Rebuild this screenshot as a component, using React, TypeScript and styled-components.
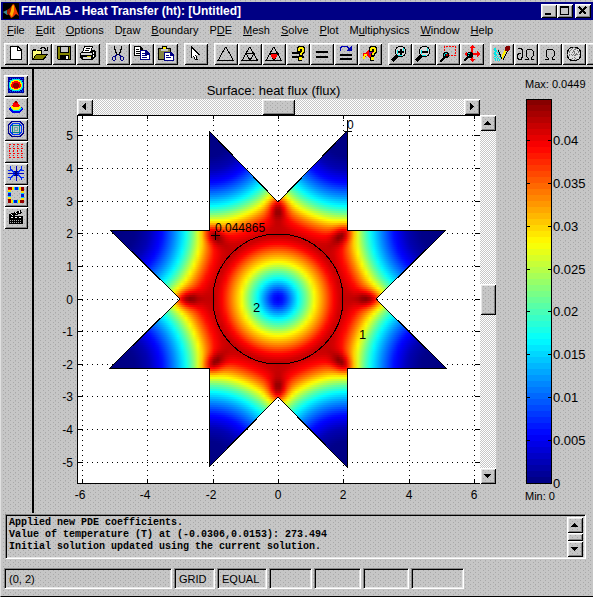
import React from "react";
import styled, { createGlobalStyle, css } from "styled-components";

const dither = css`
  background-color: #c6c6c6;
  background-image: conic-gradient(from 270deg at 1px 1px, #a9a9a9 90deg, transparent 0),
    conic-gradient(from 270deg at 1px 1px, #a9a9a9 90deg, transparent 0),
    conic-gradient(from 270deg at 1px 1px, #b8b8b8 90deg, transparent 0);
  background-size: 5px 4px, 5px 4px, 10px 8px;
  background-position: 0 0, 3px 2px, 5px 1px;
`;

const checker = css`
  background: conic-gradient(#fff 90deg, #c6c6c6 0 180deg, #fff 0 270deg, #c6c6c6 0) 0 0 / 2px 2px;
`;

const raised = css`
  border: 0;
  padding: 0;
  box-shadow: inset 1px 1px #fff, inset -1px -1px #000, inset 2px 2px #e6e6e6, inset -2px -2px #848484;
`;

const GlobalStyle = createGlobalStyle`
  * { box-sizing: border-box; }
  body { margin: 0; ${dither} color: #000; font: 11px/14px "Liberation Sans", Arial, sans-serif; }
  button { font: inherit; color: inherit; }
  svg { display: block; }
`;

const Window = styled.div`
  min-height: 100vh;
  display: flex;
  flex-direction: column;
  overflow: hidden;
  padding-top: 2px;
  border-left: 1px solid #e0e0e0;
  border-bottom: 1px solid #000;
`;

const TitleBar = styled.header`
  height: 18px;
  display: flex;
  align-items: center;
  gap: 2px;
  padding: 0 2px;
  background: #000084;
  color: #fff;
`;

const Title = styled.h1`
  flex: 1;
  margin: 0;
  font-size: 12px;
  line-height: 16px;
  font-weight: bold;
  white-space: nowrap;
`;

const WindowButtons = styled.div`
  display: flex;
`;

const WindowButton = styled.button<{ $apart?: boolean }>`
  ${raised}
  width: 16px;
  height: 14px;
  margin-left: ${(p) => (p.$apart ? 2 : 0)}px;
  background-color: #c6c6c6;
`;

const MenuBar = styled.nav`
  height: 23px;
  display: flex;
  align-items: flex-start;
  gap: 11px;
  padding: 3px 6px;
`;

const MenuItem = styled.button`
  border: 0;
  padding: 0;
  background: none;
  white-space: nowrap;
`;

const ToolBar = styled.div`
  height: 26px;
  display: flex;
  gap: 6px;
  padding-left: 3px;
  border-bottom: 2px solid #000;
`;

const ToolGroup = styled.div`
  display: flex;
  flex: none;
`;

const ToolButton = styled.button`
  ${raised}
  ${dither}
  width: 24px;
  height: 22px;
  flex: none;
  display: flex;
  align-items: center;
  justify-content: center;
`;

const Workspace = styled.main`
  display: flex;
  height: 444px;
`;

const SideBar = styled.aside`
  width: 33px;
  padding: 6px 0 0 3px;
  border-right: 2px solid #000;
`;

const Figure = styled.section`
  flex: 1;
  display: grid;
  grid-template-columns: 43px 1fr 16px 97px;
  grid-template-rows: 30px 16px auto;
  align-content: start;
`;

const FigureTitle = styled.h2`
  grid-column: 2;
  margin: 0;
  padding: 14px 10px 0 0;
  font-size: 13px;
  line-height: 16px;
  font-weight: normal;
  text-align: center;
`;

const MaxLabel = styled.div`
  grid-column: 4;
  padding: 8px 0 0 29px;
`;

const ScrollTrack = styled.div<{ $vertical?: boolean }>`
  ${checker}
  display: flex;
  flex-direction: ${(p) => (p.$vertical ? "column" : "row")};
  justify-content: space-between;
  grid-column: ${(p) => (p.$vertical ? 3 : 2)};
  grid-row: ${(p) => (p.$vertical ? 3 : 2)};
`;

const ScrollButton = styled.button`
  ${raised}
  ${dither}
  width: 16px;
  height: 16px;
  display: flex;
  align-items: center;
  justify-content: center;
`;

const ScrollThumb = styled.div<{ $vertical?: boolean }>`
  ${raised}
  ${dither}
  width: ${(p) => (p.$vertical ? 16 : 33)}px;
  height: ${(p) => (p.$vertical ? 31 : 16)}px;
`;

const PlotCell = styled.div`
  grid-column: 2;
  grid-row: 3;
  svg { width: 100%; height: auto; overflow: visible; }
`;

const ColorBarCell = styled.div`
  grid-column: 4;
  grid-row: 2 / 4;
  padding-left: 30px;
  svg { overflow: visible; }
`;

const sunken = css`
  border: 1px solid;
  border-color: #848484 #fff #fff #848484;
  box-shadow: inset 1px 1px #000, inset -1px -1px #e6e6e6;
`;

const LogPanel = styled.section`
  ${sunken}
  height: 45px;
  margin: 1px 7px 0 4px;
  display: flex;
  justify-content: space-between;
  padding: 2px 2px 2px 3px;
`;

const LogText = styled.pre`
  margin: 0;
  font: bold 10px/12px "Liberation Mono", "Courier New", monospace;
`;

const LogScroll = styled.div`
  display: flex;
  flex-direction: column;
  justify-content: space-between;
  height: 40px;
`;

const LogThumb = styled.div`
  ${raised}
  ${dither}
  width: 16px;
  height: 8px;
`;

const StatusBar = styled.footer`
  display: flex;
  gap: 2px;
  padding: 9px 3px 7px;
`;

const StatusCell = styled.div<{ $width: number }>`
  ${sunken}
  width: ${(p) => p.$width}px;
  height: 21px;
  padding: 3px 4px;
`;

const Mark = styled.text<{ $large?: boolean }>`
  font: ${(p) => (p.$large ? 13 : 12)}px "Liberation Sans", Arial, sans-serif;
`;

/* ---------- heat-flux field ---------- */

type Table = [number, number][];

function lookup(table: Table, x: number) {
  if (x <= table[0][0]) return table[0][1];
  for (let i = 1; i < table.length; i++) {
    const [x1, y1] = table[i];
    if (x <= x1) {
      const [x0, y0] = table[i - 1];
      return y0 + ((y1 - y0) * (x - x0)) / (x1 - x0);
    }
  }
  return table[table.length - 1][1];
}

const DISC: Table = [[0, 0.11], [6, 0.15], [13, 0.26], [20, 0.37], [29, 0.5], [37, 0.63], [47, 0.76], [55, 0.87], [65, 0.95], [90, 0.96]];
const ARM: Table = [[0, 0], [25, 0.01], [38, 0.05], [52, 0.14], [65, 0.27], [74, 0.37], [81, 0.47], [90, 0.62], [98, 0.75], [106, 0.86], [115, 0.92], [125, 0.94]];

function flux(x: number, y: number) {
  const r = Math.hypot(x, y);
  const step = Math.PI / 4;
  const a = ((Math.atan2(y, x) % step) + step) % step;
  const off = a - step / 2;
  const d = Math.hypot(181 - r * Math.cos(off), r * Math.sin(off));
  const corner = Math.min(a, step - a);
  const along = r * Math.cos(corner) - 91;
  const across = r * Math.sin(corner);
  const bump = 0.16 * Math.exp(-((along / 11) ** 2) - (across / 9) ** 2);
  return Math.min(1, Math.min(lookup(DISC, r), lookup(ARM, d)) + bump);
}

function jet(v: number) {
  const ch = (c: number) => Math.round(255 * Math.max(0, Math.min(1, 1.5 - Math.abs(4 * v - c))));
  return `rgb(${ch(3)},${ch(2)},${ch(1)})`;
}

const CX = 201;
const CY = 184;
const STAR = [
  [-69, -168], [0, -97], [69, -168], [69, -69], [168, -69], [98, 0], [168, 69], [69, 69],
  [69, 168], [0, 98], [-69, 168], [-69, 69], [-168, 69], [-98, 0], [-168, -69], [-69, -69],
].map(([x, y]) => `${CX + x},${CY + y}`).join(" ");

const BAND = 2;
const BANDS = Array.from({ length: 168 }, (_, i) => {
  const y = -168 + i * BAND;
  const half = Math.abs(y + 1) > 69 ? 70 : 168;
  const count = half === 70 ? 35 : 84;
  const stops = Array.from({ length: count + 1 }, (_, k) => jet(flux(-half + (2 * half * k) / count, y + 1)));
  return { y, half, stops };
});

const XT: [number, string][] = [[5, "-6"], [70, "-4"], [136, "-2"], [201, "0"], [266, "2"], [332, "4"], [397, "6"]];
const YT: [number, string][] = [[20, "5"], [53, "4"], [86, "3"], [118, "2"], [151, "1"], [184, "0"], [216, "-1"], [249, "-2"], [281, "-3"], [314, "-4"], [347, "-5"]];

function SurfacePlot() {
  return (
    <svg viewBox="0 0 403 369" role="img" aria-label="Heat flux surface">
      <defs>
        <clipPath id="star"><polygon points={STAR} /></clipPath>
        {BANDS.map((b, i) => (
          <linearGradient key={i} id={`band${i}`} gradientUnits="userSpaceOnUse" x1={CX - b.half} x2={CX + b.half} y1="0" y2="0">
            {b.stops.map((c, k) => <stop key={k} offset={k / (b.stops.length - 1)} stopColor={c} />)}
          </linearGradient>
        ))}
      </defs>
      <rect width="403" height="369" fill="#fff" />
      <g shapeRendering="crispEdges" stroke="#000">
        {XT.map(([x]) => <path key={x} d={`M${x + 0.5} 0V369`} strokeDasharray="1 4" />)}
        {YT.map(([y]) => <path key={y} d={`M0 ${y + 0.5}H403`} strokeDasharray="1 4" />)}
        {XT.map(([x]) => <path key={x} d={`M${x + 0.5} 0v4M${x + 0.5} 369v-5`} />)}
        {YT.map(([y]) => <path key={y} d={`M0 ${y + 0.5}h5M403 ${y + 0.5}h-5`} />)}
        <path d="M0 .5H403M.5 0V369M0 368.5H403" />
      </g>
      <g clipPath="url(#star)" shapeRendering="crispEdges">
        {BANDS.map((b, i) => (
          <rect key={i} x={CX - b.half} y={CY + b.y} width={2 * b.half} height={BAND} fill={`url(#band${i})`} />
        ))}
      </g>
      <g fill="none" stroke="#000" shapeRendering="crispEdges">
        <polygon points={STAR} />
        <circle cx="201" cy="184" r="65" />
        <path d="M134 120.5h9M138.5 116v9M267 16.5h8M270.5 5v12" />
      </g>
      <Mark x="138" y="117">0.044865</Mark>
      <Mark x="270" y="14">0</Mark>
      <Mark x="176" y="197" $large>2</Mark>
      <Mark x="282" y="224" $large>1</Mark>
      {XT.map(([x, t]) => <Mark key={t} x={t.startsWith("-") ? x - 2 : x} y="384" textAnchor="middle">{t}</Mark>)}
      {YT.map(([y, t]) => <Mark key={t} x="-4" y={y + 5} textAnchor="end">{t}</Mark>)}
    </svg>
  );
}

const BAR_TICKS: [number, string][] = [[41, "0.04"], [84, "0.035"], [127, "0.03"], [170, "0.025"], [212, "0.02"], [255, "0.015"], [298, "0.01"], [341, "0.005"], [384, "0"]];

function ColorBar() {
  return (
    <svg width="26" height="385" role="img" aria-label="Colour scale">
      {Array.from({ length: 64 }, (_, i) => (
        <rect key={i} x="0" y={i * 6} width="26" height="6" fill={jet(1 - (i + 0.5) / 64)} />
      ))}
      <g stroke="#000" fill="none" shapeRendering="crispEdges">
        <rect x=".5" y=".5" width="25" height="384" />
        {BAR_TICKS.map(([y]) => <path key={y} d={`M0 ${y + 0.5}h4M26 ${y + 0.5}h-4`} />)}
      </g>
      {BAR_TICKS.map(([y, t]) => <Mark key={t} x="27" y={y + 5} $large>{t}</Mark>)}
      <text x="-1" y="401">Min: 0</text>
    </svg>
  );
}

/* ---------- icons ---------- */

const Pix = ({ children }: { children?: React.ReactNode }) => (
  <svg width="20" height="18" viewBox="0 0 20 18" fill="none" stroke="none" shapeRendering="crispEdges" aria-hidden="true">
    {children}
  </svg>
);

const Arrow = ({ d }: { d: string }) => (
  <svg width="8" height="8" viewBox="0 0 8 8" shapeRendering="crispEdges" aria-hidden="true"><path d={d} /></svg>
);
const LEFT = "M5 0v7h-1v-1h-1v-1h-1v-1h-1v-1h1v-1h1v-1h1v-1z";
const RIGHT = "M2 0v7h1v-1h1v-1h1v-1h1v-1h-1v-1h-1v-1h-1v-1z";
const UP = "M0 6h7v-1h-1v-1h-1v-1h-1v-1h-1v1h-1v1h-1v1h-1z";
const DOWN = "M0 2h7v1h-1v1h-1v1h-1v1h-1v-1h-1v-1h-1v-1h-1z";

const Magnifier = ({ sign }: { sign: string }) => (
  <Pix>
    <path d="M8 10l-6 6" stroke="#000" strokeWidth="3" />
    <path d="M8 1h5v1h2v2h1v5h-1v2h-2v1H8v-1H6V9H5V4h1V2h2z" fill="#000" />
    <path d="M8 2h5v1h1v1h1v5h-1v1h-1v1H8v-1H7V9H6V4h1V3h1z" fill="#d8d8d8" />
    <path d="M7 5h1v5h4v1H8V9H7zM13 3h1v5h-1z" fill="#00e7e7" />
    <path d={sign} fill="#000" />
  </Pix>
);

const Question = ({ x }: { x: number }) => (
  <g transform={`translate(${x} 0)`}>
    <path d="M1 1h6v1h1v6h-1v1h-1v2h-1v5H1v-4h1V8h2V5H4v2H0V2h1z" fill="#000" />
    <path d="M1 3h1V2h4v1h1v4H6v1H5v2H3V8h1V7h1V4H3v2H1zM2 12h3v3H2z" fill="#ffef00" />
  </g>
);

const BoundarySide = () => (
  <>
    <path d="M2 0h4v3H2z" fill="#940000" />
    <path d="M6 0h2v3H6zM13 0h2v3h-2z" fill="#ffde00" />
    <path d="M8 0h1v3H8zM12 0h1v3h-1z" fill="#00d6ff" />
    <path d="M9 0h3v3H9z" fill="#0018d6" />
    <path d="M15 0h1v3h-1z" fill="#f00" />
  </>
);

const TRI = "M9.500 2L2 15.500H17.500L10 2";

const icons: Record<string, React.ReactNode> = {
  New: <Pix><path d="M4 1h8l4 4v10H4z" fill="#000" /><path d="M5 2h6v4h4v8H5z" fill="#fff" /><path d="M12 3l2 2h-2z" fill="#fff" /></Pix>,
  Open: <Pix><path d="M2 5h1V4h3v1h6v4H6l-4 6z" fill="#000" /><path d="M3 6h3V5h1v1h4v3H6l-3 5z" fill="#ffff7b" /><path d="M6 9h12l-4 6H2z" fill="#000" /><path d="M6 10h10l-3 4H4z" fill="#848400" /><path d="M10 3.500h1V2h3v1h1v2h2M17.500 2v4M14 5.500h4" stroke="#000" /></Pix>,
  Save: <Pix><path d="M3 1h14v14H4l-1-1z" fill="#000" /><path d="M4 2h2v6h9V2h1v12H4z" fill="#848400" /><path d="M7 2h7v5H7z" fill="#c6c6c6" /><path d="M6 10h9v4H6z" fill="#000" /><path d="M12 11h2v3h-2z" fill="#fff" /></Pix>,
  Print: <Pix><path d="M6 1h9l-1 4h2l2 2v4l-3 4H4l-2-2V8l3-3z" fill="#000" /><path d="M7 2h7l-2 5H5z" fill="#fff" /><path d="M8 3.500h4M7 5.500h4" stroke="#000" /><path d="M3 8h11v2H3zM5 12h8v2H5z" fill="#d6d6d6" /><path d="M15 7h1v2h-1zM15 10h1v2h-1z" fill="#fff" /><path d="M9 11h4v1H9z" fill="#d6ce00" /></Pix>,
  Cut: <Pix><path d="M6 1h1v3h1v3h1v2h2V7h1V4h1V1h1v4h-1v3h-1v2H8V8H7V5H6z" fill="#000" /><path d="M8 9h1v2H8v4H7v1H5v-1H4v-3h1v-1h2v-1h1zM11 9h1v1h1v1h2v1h1v3h-1v1h-2v-1h-1v-4h-1zM5 12v3h2v-3zM13 12v3h2v-3z" fill="#000084" fillRule="evenodd" /></Pix>,
  Copy: <Pix><path d="M2 1h6l3 3v7H2z" fill="#000" /><path d="M3 2h5v3h2v5H3z" fill="#fff" /><path d="M4 4.500h3M4 6.500h5M4 8.500h5" stroke="#000" /><path d="M8 5h6l4 4v6H8z" fill="#000084" /><path d="M9 6h4v4h4v4H9z" fill="#fff" /><path d="M10 8.500h3M10 10.500h5M10 12.500h5" stroke="#000084" /></Pix>,
  Paste: <Pix><path d="M2 3h4V1h5v2h4v12H2z" fill="#000" /><path d="M3 4h11v10H3z" fill="#848442" /><path d="M5 4h7v2H5z" fill="#c6c6c6" /><path d="M7 2h3v2H7z" fill="#ffef00" /><path d="M8 7h7l3 3v6H8z" fill="#000084" /><path d="M9 8h5v3h3v4H9z" fill="#fff" /><path d="M10 10.500h3M10 12.500h5" stroke="#000084" /></Pix>,
  Select: <Pix><path d="M5 1l9 9h-4l2 5h-3l-2-4-2 3z" fill="#000" /><path d="M6 4l5 5H8l2 5-2-4-2 2z" fill="#fff" stroke="#fff" strokeWidth="1" /></Pix>,
  "Initialize mesh": <Pix><path d={TRI} stroke="#000" /></Pix>,
  "Refine mesh": <Pix><path d={TRI + "M6 8.500h8L10 15z"} stroke="#000" /></Pix>,
  "Refine selected": <Pix><path d={TRI + "M6 8.500h8L10 15z"} stroke="#000" /><path d="M7 9h6v2l-2 3H9l-2-3z" fill="#f00" /></Pix>,
  "Solve problem": <Pix><path d="M4 7h12v2H4zM4 11h12v2H4z" fill="#000" /><Question x={9} /></Pix>,
  Solve: <Pix><path d="M4 6h12v2H4zM4 11h12v2H4z" fill="#000" /></Pix>,
  Restart: <Pix><path d="M4 9h12v2H4zM4 13h12v2H4z" fill="#000" /><path d="M4.500 6V3L6 1.500h5l2 2v2" stroke="#0000b5" /><path d="M10 6h6V1z" fill="#0000b5" /></Pix>,
  "Plot parameters": <Pix><path d="M3 8h3l4-5h3v5l-2 6-4-3-4 3z" fill="#f00" /><path d="M9 3h3v5l-3 2z" fill="#8400a5" /><path d="M4 9h3v2H5v3H3z" fill="#ffef00" /><Question x={9} /></Pix>,
  "Zoom in": <Magnifier sign="M8 6h6v2H8zM10 4h2v6h-2z" />,
  "Zoom out": <Magnifier sign="M8 6h6v2H8z" />,
  "Zoom window": <Pix><path d="M6.500 9V1.500h11v9H11" stroke="#f00" strokeDasharray="2 1" /><path d="M7 12l-5 5" stroke="#000" strokeWidth="2" /><path d="M6 7h4v1h1v4h-1v1H6v-1H5V8h1z" fill="#000" /><path d="M7 8h2v1H7zM6 9h1v2H6z" fill="#00e7e7" /><path d="M8 9h2v2H8z" fill="#b00000" /></Pix>,
  "Zoom extents": <Pix><path d="M10 0l3 3h-2v5h4V6l3 3-3 3v-2h-4v4h2l-3 3-3-3h2v-4H5v2L2 9l3-3v2h4V3H7z" fill="#f00" /><path d="M7 11l-5 5" stroke="#000" strokeWidth="2" /><path d="M6 7h4v1h1v4h-1v1H6v-1H5V8h1z" fill="#000" /><path d="M6 8h2v1H6zM6 10h1v1H6z" fill="#00e7e7" /></Pix>,
  "Draw mode": <Pix><path d="M3 3v12h6M3 4l6 9M3 8l3 6" stroke="#00e7e7" strokeDasharray="1 1" strokeWidth="2" /><path d="M6 5l4 9M16 5l-5 10" stroke="#000" /><path d="M10 10l3-6 2 1-4 8-1 1z" fill="#ffef00" /><path d="M13 2l2-1h3v3l-2 2h-3z" fill="#840000" /></Pix>,
  "Boundary mode": <Pix><path d="M2 4V3h3v1h1v8H5v2H2v-1H1V9h1V8h3" stroke="#000" /><path d="M9 14.500h3V13l-2-2V6l2-2h3l2 2v5l-2 2v1.500h3" stroke="#000" /></Pix>,
  "Subdomain mode": <Pix><path d="M5 14.500h3V13l-2-2V6l2-2h4l2 2v5l-2 2v1.500h3" stroke="#000" strokeWidth="1" /></Pix>,
  "Mesh mode": <Pix><circle cx="10" cy="9" r="7" fill="#dedede" stroke="#000" /><path d="M4 6l9 9M6 3l10 9M10 2l6 6M16 6l-9 9M13 3l-9 9M10 2L4 8M10 2v14M3 9h14" stroke="#777" strokeDasharray="1 1" /></Pix>,
  "Plot mode": <Pix />,
  "Surface plot": <Pix><path d="M2 0h16v16H2z" fill="#00009c" /><path d="M3.500 1.500h13v13h-13z" stroke="#004aff" strokeDasharray="1 1" /><path d="M6 2h8v1h2v2h1v6h-1v2h-2v1H6v-1H4v-2H3V5h1V3h2z" fill="#00e7e7" /><path d="M7 3h6v1h2v2h1v4h-1v2h-2v1H7v-1H5v-2H4V6h1V4h2z" fill="#ffef00" /><path d="M8 4h4v1h2v2h1v3h-1v1h-2v1H8v-1H6v-1H5V7h1V5h2z" fill="#f00" /><path d="M8 6h4v1h1v3h-1v1H8v-1H7V7h1z" fill="#940000" /></Pix>,
  "Height plot": <Pix><path d="M2 10l3-2h10l3 2-5 4H7z" fill="#0000e7" /><path d="M4 9h12l-3 3H7z" fill="#00e7e7" /><path d="M6 6h8l1 3-3 2H8L5 9z" fill="#ffef00" /><path d="M9 2h2l3 5-2 1H8L6 7z" fill="#f00" /><path d="M9 2h2v2H9z" fill="#840000" /></Pix>,
  "Contour plot": <Pix><path d="M6 .500h8L17.500 4v8L14 15.500H6L2.500 12V4z" stroke="#00008c" /><path d="M7 2.500h6L15.500 5v6L13 13.500H7L4.500 11V5z" stroke="#0039ff" /><path d="M6.500 4.500h7v7h-7z" stroke="#00848c" /><path d="M8.500 6.500h3v3h-3z" stroke="#6aa" /></Pix>,
  "Arrow plot": <Pix>
    {[1, 5, 10, 14].map((y) => [3, 7, 11, 15].map((x) => (
      <path key={`${x}-${y}`} d={`M${x} ${y}h2v1h-2z${y < 8 ? `M${x} ${y + 2}h1v1h-1z` : `M${x} ${y - 2}h1v1h-1z`}`} fill="#f00" />
    )))}
  </Pix>,
  "Flow plot": <Pix><path d="M10 1v15M2 8.500h16" stroke="#0000c6" /><path d="M8 6h4v5H8z" fill="#000084" /><path d="M4.500 1v3l4 4M15.500 1v3l-4 4M4.500 15v-2l4-4M15.500 15v-2l-4-4M2 5.500h4M14 5.500h4M2 12.500h4M14 12.500h4" stroke="#0029ff" /></Pix>,
  "Boundary plot": <Pix>
    <BoundarySide />
    <g transform="rotate(90 10 8)"><BoundarySide /></g>
    <g transform="rotate(180 10 8)"><BoundarySide /></g>
    <g transform="rotate(270 10 8)"><BoundarySide /></g>
  </Pix>,
  Animate: <Pix><path d="M3 5l12-4 1 3-9 3h10v8H3z" fill="#000" /><path d="M5 5l2 2M9 3l2 2M13 2l1 2M5 8.500h2M9 8.500h2M13 8.500h2" stroke="#fff" /><path d="M4 11.500h12M4 13.500h12" stroke="#aaa" strokeDasharray="1 1" /></Pix>,
};

const TOOL_GROUPS = [
  ["New", "Open", "Save", "Print"],
  ["Cut", "Copy", "Paste"],
  ["Select"],
  ["Initialize mesh", "Refine mesh", "Refine selected", "Solve problem", "Solve", "Restart", "Plot parameters"],
  ["Zoom in", "Zoom out", "Zoom window", "Zoom extents"],
  ["Draw mode", "Boundary mode", "Subdomain mode", "Mesh mode", "Plot mode"],
];
const SIDE = ["Surface plot", "Height plot", "Contour plot", "Arrow plot", "Flow plot", "Boundary plot", "Animate"];

const MENUS: [string, number][] = [["File", 0], ["Edit", 0], ["Options", 0], ["Draw", 1], ["Boundary", 0], ["PDE", 1], ["Mesh", 0], ["Solve", 0], ["Plot", 0], ["Multiphysics", 1], ["Window", 0], ["Help", 0]];

const STATUS: [string, number][] = [["(0, 2)", 168], ["GRID", 41], ["EQUAL", 50], ["", 43], ["", 47], ["", 46], ["", 53]];

const Tool = ({ name }: { name: string }) => <ToolButton aria-label={name}>{icons[name]}</ToolButton>;

export default function App() {
  return (
    <Window>
      <GlobalStyle />
      <TitleBar>
        <svg width="16" height="16" viewBox="0 0 16 16" aria-hidden="true">
          <rect width="16" height="16" fill="#000" />
          <path d="M0 9l4-2 3 3-3 2z" fill="#3a8c94" />
          <path d="M4 7l3-2 3-4 1 3-4 8-3-1z" fill="#a01800" />
          <path d="M9 2l2-1 5 12-3-2-3 3-2 1-2-4 2-2z" fill="#f03a00" />
          <path d="M9 3l2-1v6l-2 6-2-3z" fill="#ffb000" />
        </svg>
        <Title>FEMLAB - Heat Transfer (ht): [Untitled]</Title>
        <WindowButtons>
          <WindowButton aria-label="Minimize"><svg width="16" height="14" shapeRendering="crispEdges"><path d="M4 9h6v2H4z" /></svg></WindowButton>
          <WindowButton aria-label="Maximize"><svg width="16" height="14" shapeRendering="crispEdges"><path fillRule="evenodd" d="M3 2h9v9H3zM4 4v6h7V4z" /></svg></WindowButton>
          <WindowButton aria-label="Close" $apart><svg width="16" height="14" shapeRendering="crispEdges"><path d="M4 3l7 7M11 3l-7 7" stroke="#000" strokeWidth="2" /></svg></WindowButton>
        </WindowButtons>
      </TitleBar>
      <MenuBar>
        {MENUS.map(([m, k]) => (
          <MenuItem key={m}>{m.slice(0, k)}<u>{m[k]}</u>{m.slice(k + 1)}</MenuItem>
        ))}
      </MenuBar>
      <ToolBar>
        {TOOL_GROUPS.map((g) => (
          <ToolGroup key={g[0]}>{g.map((n) => <Tool key={n} name={n} />)}</ToolGroup>
        ))}
      </ToolBar>
      <Workspace>
        <SideBar>{SIDE.map((n) => <Tool key={n} name={n} />)}</SideBar>
        <Figure>
          <FigureTitle>Surface: heat flux (flux)</FigureTitle>
          <MaxLabel>Max: 0.0449</MaxLabel>
          <ScrollTrack>
            <ScrollButton aria-label="Pan left"><Arrow d={LEFT} /></ScrollButton>
            <ScrollThumb />
            <ScrollButton aria-label="Pan right"><Arrow d={RIGHT} /></ScrollButton>
          </ScrollTrack>
          <PlotCell><SurfacePlot /></PlotCell>
          <ScrollTrack $vertical>
            <ScrollButton aria-label="Pan up"><Arrow d={UP} /></ScrollButton>
            <ScrollThumb $vertical />
            <ScrollButton aria-label="Pan down"><Arrow d={DOWN} /></ScrollButton>
          </ScrollTrack>
          <ColorBarCell><ColorBar /></ColorBarCell>
        </Figure>
      </Workspace>
      <LogPanel>
        <LogText>{"Applied new PDE coefficients.\nValue of temperature (T) at (-0.0306,0.0153): 273.494\nInitial solution updated using the current solution."}</LogText>
        <LogScroll>
          <ScrollButton aria-label="Scroll log up"><Arrow d={UP} /></ScrollButton>
          <LogThumb />
          <ScrollButton aria-label="Scroll log down"><Arrow d={DOWN} /></ScrollButton>
        </LogScroll>
      </LogPanel>
      <StatusBar>
        {STATUS.map(([t, w], i) => <StatusCell key={i} $width={w}>{t}</StatusCell>)}
      </StatusBar>
    </Window>
  );
}
